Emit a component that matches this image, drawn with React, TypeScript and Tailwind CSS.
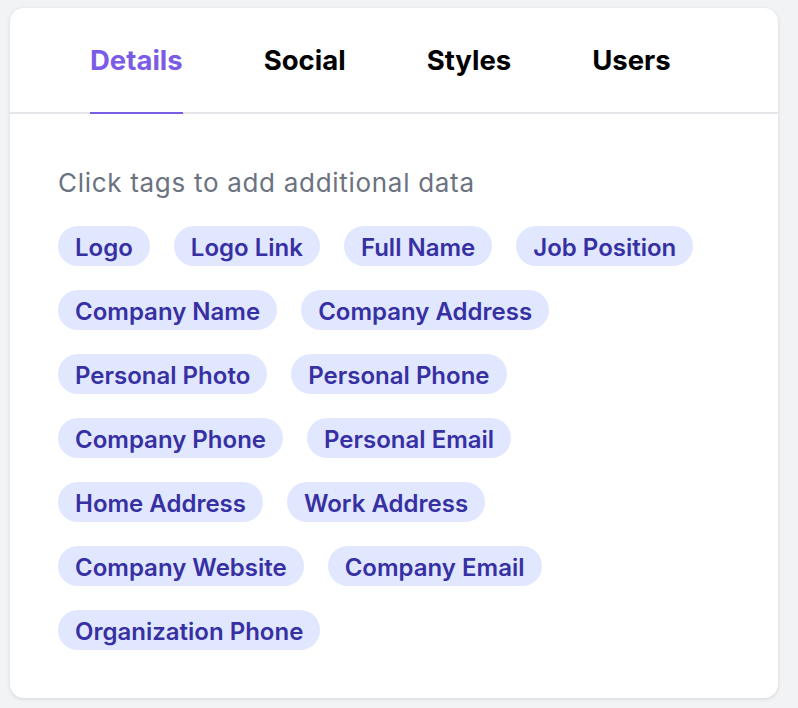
const tabs = ["Details", "Social", "Styles", "Users"];

const tagRows = [
  ["Logo", "Logo Link", "Full Name", "Job Position"],
  ["Company Name", "Company Address"],
  ["Personal Photo", "Personal Phone"],
  ["Company Phone", "Personal Email"],
  ["Home Address", "Work Address"],
  ["Company Website", "Company Email"],
  ["Organization Phone"],
];

export default function App() {
  return (
    <div className="min-h-[708px] bg-[#f2f3f5] pl-[10px] pt-[8px] font-['Inter',sans-serif]">
      <div className="h-[690px] w-[768px] rounded-[14px] bg-white shadow-[0_1px_4px_rgba(0,0,0,0.12)]">
        <div className="flex gap-[81px] border-b-2 border-[#e6e6ea] pl-[80px]">
          {tabs.map((tab, i) => (
            <button
              key={tab}
              type="button"
              className={
                i === 0
                  ? "-mb-[2px] border-b-2 border-[#7b5ce6] pb-[34px] pt-[34px] text-[27.5px] leading-[36px] font-bold text-[#7b5ce6]"
                  : "-mb-[2px] border-b-2 border-transparent pb-[34px] pt-[34px] text-[27.5px] leading-[36px] font-bold text-black"
              }
            >
              {tab}
            </button>
          ))}
        </div>
        <div className="px-[48px] pt-[53px]">
          <p className="text-[26px] leading-[32px] tracking-[0.7px] text-[#6b7280]">Click tags to add additional data</p>
          <div className="mt-[27px] flex flex-col gap-[24px]">
            {tagRows.map((row, r) => (
              <div key={r} className="flex gap-[24px]">
                {row.map((tag) => (
                  <span
                    key={tag}
                    className="flex h-[40px] items-center rounded-full bg-[#e0e7ff] px-[17px] pt-[3px] text-[24px] font-semibold text-[#3730a3]"
                  >
                    {tag}
                  </span>
                ))}
              </div>
            ))}
          </div>
        </div>
      </div>
    </div>
  );
}
